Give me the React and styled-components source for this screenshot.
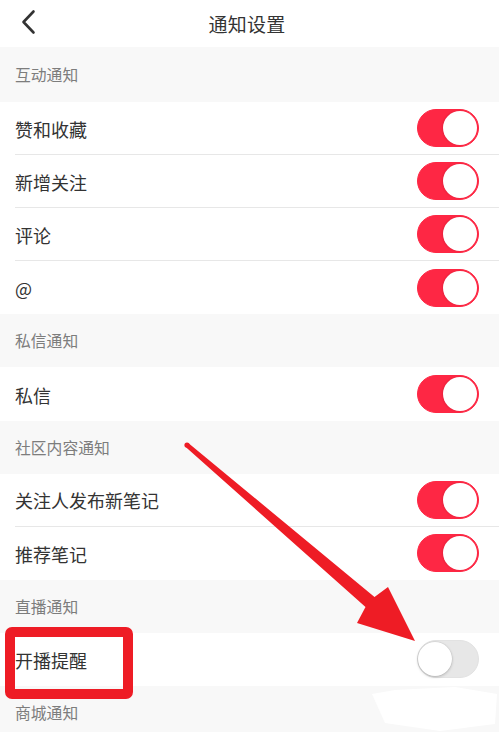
import React from "react";
import styled, { createGlobalStyle } from "styled-components";

const Global = createGlobalStyle`
  html, body { margin: 0; padding: 0; background: #ffffff; }
  body { font-family: "Noto Sans CJK SC", "Noto Sans", sans-serif; }
  * { box-sizing: border-box; }
`;

const Page = styled.div`
  position: relative;
  width: 499px;
  height: 732px;
  overflow: hidden;
  background: #ffffff;
  display: flex;
  flex-direction: column;
`;

const TopBar = styled.div`
  flex: 0 0 47px;
  height: 47px;
  display: flex;
  align-items: center;
  justify-content: center;
  position: relative;
  background: #ffffff;
`;

const BackButton = styled.div`
  position: absolute;
  left: 18px;
  top: 8px;
  width: 22px;
  height: 28px;
  display: flex;
  align-items: center;
  justify-content: center;
`;

const Title = styled.div`
  font-size: 19px;
  color: #333333;
  letter-spacing: 0.3px;
  margin-left: -5px;
`;

const SectionHeader = styled.div`
  flex: 0 0 ${(p) => p.$h}px;
  height: ${(p) => p.$h}px;
  background: #f8f8f8;
  display: flex;
  align-items: center;
  padding-left: 15px;
  font-size: 15.8px;
  color: #7d7d7d;
`;

const Row = styled.div`
  flex: 0 0 53.1px;
  height: 53.1px;
  padding-left: 15px;
  background: #ffffff;
  display: flex;
`;

const RowBody = styled.div`
  flex: 1;
  display: flex;
  align-items: center;
  justify-content: space-between;
  padding-right: 20px;
  border-bottom: ${(p) => (p.$last ? "none" : "1px solid #e7e7e7")};
`;

const Label = styled.div`
  font-size: 18px;
  color: #333333;
  padding-top: 1px;
`;

const Track = styled.div`
  position: relative;
  width: 62px;
  height: 38px;
  border-radius: 19px;
  background: ${(p) => (p.$on ? "#fe2744" : "#e7e7e7")};
  border: 1px solid ${(p) => (p.$on ? "#fe2744" : "#e2e2e2")};
`;

const Knob = styled.div`
  position: absolute;
  top: 1px;
  ${(p) => (p.$on ? "right: 1px;" : "left: 0px;")}
  width: 34px;
  height: 34px;
  border-radius: 50%;
  background: #ffffff;
  box-shadow: ${(p) =>
    p.$on ? "-1px 0 2px rgba(120,0,20,0.18)" : "0 1px 3px rgba(0,0,0,0.22), 0 0 0 0.5px rgba(0,0,0,0.06)"};
`;

const Overlay = styled.svg`
  position: absolute;
  left: 0;
  top: 0;
  width: 499px;
  height: 732px;
  pointer-events: none;
`;

const Toggle = ({ on }) => (
  <Track $on={on}>
    <Knob $on={on} />
  </Track>
);

const sections = [
  { title: "互动通知", h: 55, rows: [["赞和收藏", true], ["新增关注", true], ["评论", true], ["@", true]] },
  { title: "私信通知", h: 53.1, rows: [["私信", true]] },
  { title: "社区内容通知", h: 53.1, rows: [["关注人发布新笔记", true], ["推荐笔记", true]] },
  { title: "直播通知", h: 53.1, rows: [["开播提醒", false]] },
  { title: "商城通知", h: 53.1, rows: [] },
];

export default function App() {
  return (
    <>
      <Global />
      <Page>
        <TopBar>
          <BackButton>
            <svg width="22" height="28" viewBox="0 0 22 28">
              <polyline points="15.5,3.5 5.5,14 15.5,24.5" fill="none" stroke="#333" strokeWidth="2.6" strokeLinecap="round" strokeLinejoin="round" />
            </svg>
          </BackButton>
          <Title>通知设置</Title>
        </TopBar>
        {sections.map((s) => (
          <React.Fragment key={s.title}>
            <SectionHeader $h={s.h}>{s.title}</SectionHeader>
            {s.rows.map(([label, on], i) => (
              <Row key={label}>
                <RowBody $last={i === s.rows.length - 1}>
                  <Label>{label}</Label>
                  <Toggle on={on} />
                </RowBody>
              </Row>
            ))}
          </React.Fragment>
        ))}
        <Overlay viewBox="0 0 499 732">
          <polygon points="372,694 395,690 455,687 497,694 495,724 440,731 385,723" fill="#ffffff" />
          <circle cx="187" cy="445" r="2.6" fill="#ee1c25" />
          <polygon
            points="188.6,443.2 374.5,597 388,587 415,641 357,623 365.5,607 185.4,446.8"
            fill="#ee1c25"
          />
          <rect x="10" y="632" width="118" height="62" rx="2" fill="none" stroke="#ee1c25" strokeWidth="10" />
        </Overlay>
      </Page>
    </>
  );
}
